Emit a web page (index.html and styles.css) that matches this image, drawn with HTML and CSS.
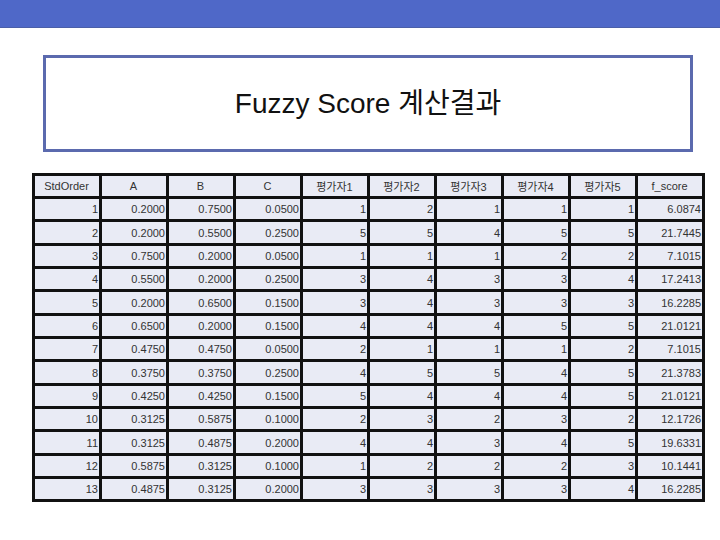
FILE: index.html
```html
<!DOCTYPE html>
<html lang="ko">
<head>
<meta charset="utf-8">
<link rel="stylesheet" href="styles.css">
</head>
<body>
<div class="topbar"></div>
<div class="titlebox"><h1 class="title">Fuzzy Score 계산결과</h1></div>
<table class="grid">
<colgroup><col><col><col><col><col><col><col><col><col><col></colgroup>
<thead>
<tr><th>StdOrder</th><th>A</th><th>B</th><th>C</th><th>평가자1</th><th>평가자2</th><th>평가자3</th><th>평가자4</th><th>평가자5</th><th>f_score</th></tr>
</thead>
<tbody>
<tr><td>1</td><td>0.2000</td><td>0.7500</td><td>0.0500</td><td>1</td><td>2</td><td>1</td><td>1</td><td>1</td><td>6.0874</td></tr>
<tr><td>2</td><td>0.2000</td><td>0.5500</td><td>0.2500</td><td>5</td><td>5</td><td>4</td><td>5</td><td>5</td><td>21.7445</td></tr>
<tr><td>3</td><td>0.7500</td><td>0.2000</td><td>0.0500</td><td>1</td><td>1</td><td>1</td><td>2</td><td>2</td><td>7.1015</td></tr>
<tr><td>4</td><td>0.5500</td><td>0.2000</td><td>0.2500</td><td>3</td><td>4</td><td>3</td><td>3</td><td>4</td><td>17.2413</td></tr>
<tr><td>5</td><td>0.2000</td><td>0.6500</td><td>0.1500</td><td>3</td><td>4</td><td>3</td><td>3</td><td>3</td><td>16.2285</td></tr>
<tr><td>6</td><td>0.6500</td><td>0.2000</td><td>0.1500</td><td>4</td><td>4</td><td>4</td><td>5</td><td>5</td><td>21.0121</td></tr>
<tr><td>7</td><td>0.4750</td><td>0.4750</td><td>0.0500</td><td>2</td><td>1</td><td>1</td><td>1</td><td>2</td><td>7.1015</td></tr>
<tr><td>8</td><td>0.3750</td><td>0.3750</td><td>0.2500</td><td>4</td><td>5</td><td>5</td><td>4</td><td>5</td><td>21.3783</td></tr>
<tr><td>9</td><td>0.4250</td><td>0.4250</td><td>0.1500</td><td>5</td><td>4</td><td>4</td><td>4</td><td>5</td><td>21.0121</td></tr>
<tr><td>10</td><td>0.3125</td><td>0.5875</td><td>0.1000</td><td>2</td><td>3</td><td>2</td><td>3</td><td>2</td><td>12.1726</td></tr>
<tr><td>11</td><td>0.3125</td><td>0.4875</td><td>0.2000</td><td>4</td><td>4</td><td>3</td><td>4</td><td>5</td><td>19.6331</td></tr>
<tr><td>12</td><td>0.5875</td><td>0.3125</td><td>0.1000</td><td>1</td><td>2</td><td>2</td><td>2</td><td>3</td><td>10.1441</td></tr>
<tr><td>13</td><td>0.4875</td><td>0.3125</td><td>0.2000</td><td>3</td><td>3</td><td>3</td><td>3</td><td>4</td><td>16.2285</td></tr>
</tbody>
</table>
</body>
</html>
```
FILE: styles.css
```css
html, body {
  margin: 0;
  padding: 0;
  background: #ffffff;
}
body {
  width: 720px;
  height: 540px;
  overflow: hidden;
  font-family: "Liberation Sans", Arial, "Noto Sans CJK KR", sans-serif;
}
.topbar {
  height: 27px;
  background: #4f68c8;
  border-bottom: 1px solid #4b5fa8;
}
.titlebox {
  box-sizing: border-box;
  margin: 27px 0 0 43px;
  width: 650px;
  height: 97px;
  border: 3px solid #5b6aae;
  display: flex;
  align-items: center;
  justify-content: center;
  padding-bottom: 6px;
}
.title {
  margin: 0;
  font-weight: normal;
  font-size: 28px;
  color: #111;
  font-family: "Liberation Sans", Arial, "Noto Sans CJK KR", sans-serif;
}
.grid {
  margin: 21px 0 0 32px;
  border-collapse: collapse;
  table-layout: fixed;
  width: 673px;
  font-size: 11px;
  color: #333;
}
.grid col {
  width: 67px;
}
.grid th, .grid td {
  border: 3px solid #111;
  background: #e9ebf5;
  padding: 0 1px 0 0;
  white-space: nowrap;
  overflow: hidden;
}
.grid th {
  font-weight: normal;
  text-align: center;
  height: 20px;
  font-family: "Liberation Sans", Arial, "Noto Sans CJK KR", sans-serif;
}
.grid td {
  text-align: right;
  height: 20.35px;
}
```
